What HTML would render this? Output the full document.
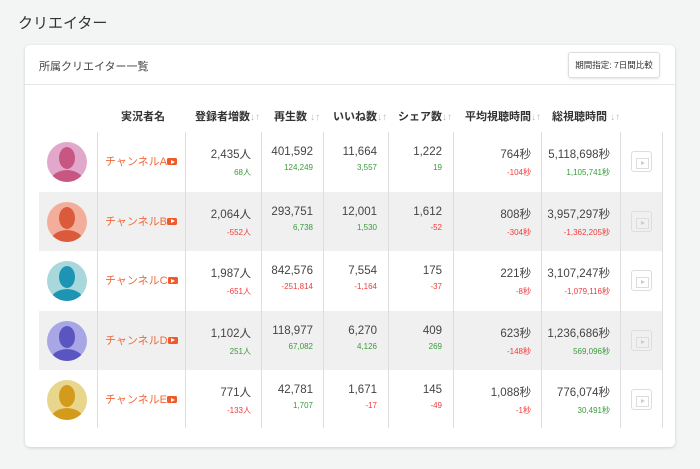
<!DOCTYPE html>
<html><head><meta charset="utf-8"><style>
*{margin:0;padding:0;box-sizing:border-box}
body{width:700px;height:469px;background:#f2f5f4;font-family:"Liberation Sans","Noto Sans CJK JP",sans-serif;color:#333;position:relative;overflow:hidden}
.title{position:absolute;left:18px;top:12px;font-size:15px;color:#333;font-weight:normal}
.card{position:absolute;left:25px;top:45px;width:650px;height:402px;background:#fff;border-radius:5px;box-shadow:0 1px 3px rgba(0,0,0,.15)}
.ch{height:40px;border-bottom:1px solid #e6e6e6;position:relative}
.ch .t{position:absolute;left:14px;top:13px;font-size:11px;color:#444}
.btn{position:absolute;right:15px;top:7px;width:92px;height:26px;border:1px solid #ddd;border-radius:3px;font-size:8.5px;line-height:24px;text-align:center;color:#333;box-shadow:0 1px 2px rgba(0,0,0,.1)}
.th{position:absolute;top:63px;font-size:11px;font-weight:bold;color:#333;white-space:nowrap}
.th i{font-style:normal;color:#bbb;font-weight:normal;font-size:10px}
.row{position:absolute;left:14px;width:623px;height:59.5px}
.row.g{background:#f0f0f0}
.vl{position:absolute;top:87px;height:296px;width:1px;background:#ddd}
.av{position:absolute;left:8px;top:10px;width:40px;height:40px;border-radius:50%;overflow:hidden}
.nm{position:absolute;left:66px;top:21px;font-size:11px;color:#f06a3c;white-space:nowrap}
.yt{display:inline-block;width:10px;height:7px;background:#f05a28;border-radius:1.5px;position:relative;vertical-align:0}
.yt:after{content:"";position:absolute;left:3.5px;top:1.5px;border-left:4px solid #fff;border-top:2px solid transparent;border-bottom:2px solid transparent}
.c{position:absolute;text-align:right;top:14px;white-space:nowrap}
.c b{display:block;font-weight:normal;font-size:11.5px;color:#444}
.c s{display:block;text-decoration:none;font-size:8px;margin-top:5px}
.p{color:#3a9a3a}.n{color:#f03c3c}
.tv{position:absolute;left:592px;top:19px;width:21px;height:21px;border:1px solid #ddd;border-radius:3px}
.tv:before{content:"";position:absolute;left:4px;top:6px;width:11px;height:9px;border:1px solid #ddd}
.tv:after{content:"";position:absolute;left:8.5px;top:9px;border-left:4px solid #ccc;border-top:2px solid transparent;border-bottom:2px solid transparent}
</style></head><body>
<div class="title">クリエイター</div>
<div class="card">
<div class="ch"><span class="t">所属クリエイター一覧</span><div class="btn">期間指定: 7日間比較</div></div>
<div class="th" style="left:96px">実況者名</div>
<div class="th" style="left:170px">登録者増数<i>↓↑</i></div>
<div class="th" style="left:249px">再生数 <i>↓↑</i></div>
<div class="th" style="left:308px">いいね数<i>↓↑</i></div>
<div class="th" style="left:373px">シェア数<i>↓↑</i></div>
<div class="th" style="left:440px">平均視聴時間<i>↓↑</i></div>
<div class="th" style="left:527px">総視聴時間 <i>↓↑</i></div>

<div class="row" style="top:87px">
<div class="av" style="background:#e2a8cc"><svg width="40" height="40" viewBox="0 0 40 40"><ellipse cx="20" cy="16" rx="8" ry="11" fill="#c85683"/><path d="M3 40 Q5 29 20 28 Q35 29 37 40Z" fill="#c85683"/></svg></div>
<div class="nm">チャンネルA<span class="yt"></span></div>
<div class="c" style="right:411px"><b>2,435人</b><s class="p">68人</s></div>
<div class="c" style="right:349px"><b>401,592</b><s class="p">124,249</s></div>
<div class="c" style="right:285px"><b>11,664</b><s class="p">3,557</s></div>
<div class="c" style="right:220px"><b>1,222</b><s class="p">19</s></div>
<div class="c" style="right:131px"><b>764秒</b><s class="n">-104秒</s></div>
<div class="c" style="right:52px"><b>5,118,698秒</b><s class="p">1,105,741秒</s></div>
<div class="tv"></div></div>
<div class="row g" style="top:146.5px">
<div class="av" style="background:#f2ae9a"><svg width="40" height="40" viewBox="0 0 40 40"><ellipse cx="20" cy="16" rx="8" ry="11" fill="#db5a3c"/><path d="M3 40 Q5 29 20 28 Q35 29 37 40Z" fill="#db5a3c"/></svg></div>
<div class="nm">チャンネルB<span class="yt"></span></div>
<div class="c" style="right:411px"><b>2,064人</b><s class="n">-552人</s></div>
<div class="c" style="right:349px"><b>293,751</b><s class="p">6,738</s></div>
<div class="c" style="right:285px"><b>12,001</b><s class="p">1,530</s></div>
<div class="c" style="right:220px"><b>1,612</b><s class="n">-52</s></div>
<div class="c" style="right:131px"><b>808秒</b><s class="n">-304秒</s></div>
<div class="c" style="right:52px"><b>3,957,297秒</b><s class="n">-1,362,205秒</s></div>
<div class="tv"></div></div>
<div class="row" style="top:206px">
<div class="av" style="background:#a8d8dc"><svg width="40" height="40" viewBox="0 0 40 40"><ellipse cx="20" cy="16" rx="8" ry="11" fill="#1e94b4"/><path d="M3 40 Q5 29 20 28 Q35 29 37 40Z" fill="#1e94b4"/></svg></div>
<div class="nm">チャンネルC<span class="yt"></span></div>
<div class="c" style="right:411px"><b>1,987人</b><s class="n">-651人</s></div>
<div class="c" style="right:349px"><b>842,576</b><s class="n">-251,814</s></div>
<div class="c" style="right:285px"><b>7,554</b><s class="n">-1,164</s></div>
<div class="c" style="right:220px"><b>175</b><s class="n">-37</s></div>
<div class="c" style="right:131px"><b>221秒</b><s class="n">-8秒</s></div>
<div class="c" style="right:52px"><b>3,107,247秒</b><s class="n">-1,079,116秒</s></div>
<div class="tv"></div></div>
<div class="row g" style="top:265.5px">
<div class="av" style="background:#a9a6e6"><svg width="40" height="40" viewBox="0 0 40 40"><ellipse cx="20" cy="16" rx="8" ry="11" fill="#5a55c0"/><path d="M3 40 Q5 29 20 28 Q35 29 37 40Z" fill="#5a55c0"/></svg></div>
<div class="nm">チャンネルD<span class="yt"></span></div>
<div class="c" style="right:411px"><b>1,102人</b><s class="p">251人</s></div>
<div class="c" style="right:349px"><b>118,977</b><s class="p">67,082</s></div>
<div class="c" style="right:285px"><b>6,270</b><s class="p">4,126</s></div>
<div class="c" style="right:220px"><b>409</b><s class="p">269</s></div>
<div class="c" style="right:131px"><b>623秒</b><s class="n">-148秒</s></div>
<div class="c" style="right:52px"><b>1,236,686秒</b><s class="p">569,096秒</s></div>
<div class="tv"></div></div>
<div class="row" style="top:325px">
<div class="av" style="background:#e8d68c"><svg width="40" height="40" viewBox="0 0 40 40"><ellipse cx="20" cy="16" rx="8" ry="11" fill="#d49a1c"/><path d="M3 40 Q5 29 20 28 Q35 29 37 40Z" fill="#d49a1c"/></svg></div>
<div class="nm">チャンネルE<span class="yt"></span></div>
<div class="c" style="right:411px"><b>771人</b><s class="n">-133人</s></div>
<div class="c" style="right:349px"><b>42,781</b><s class="p">1,707</s></div>
<div class="c" style="right:285px"><b>1,671</b><s class="n">-17</s></div>
<div class="c" style="right:220px"><b>145</b><s class="n">-49</s></div>
<div class="c" style="right:131px"><b>1,088秒</b><s class="n">-1秒</s></div>
<div class="c" style="right:52px"><b>776,074秒</b><s class="p">30,491秒</s></div>
<div class="tv"></div></div>

<div class="vl" style="left:72px"></div>
<div class="vl" style="left:160px"></div>
<div class="vl" style="left:236px"></div>
<div class="vl" style="left:298px"></div>
<div class="vl" style="left:363px"></div>
<div class="vl" style="left:428px"></div>
<div class="vl" style="left:516px"></div>
<div class="vl" style="left:595px"></div>
<div class="vl" style="left:637px"></div>
</div>
</body></html>
